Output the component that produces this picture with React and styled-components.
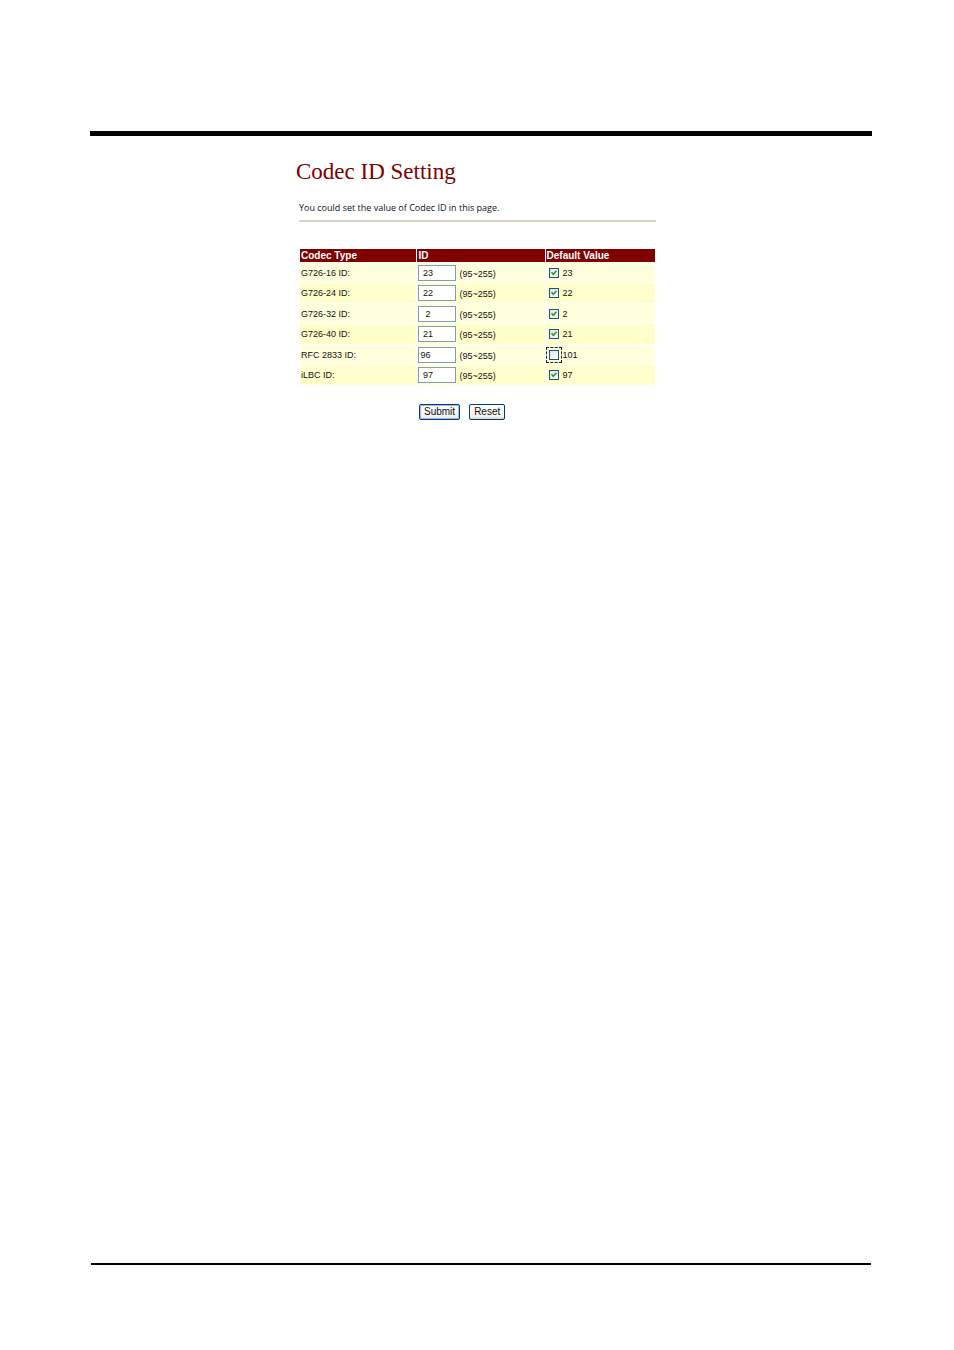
import React from "react";
import styled, { createGlobalStyle } from "styled-components";

const GlobalStyle = createGlobalStyle`
  * {
    box-sizing: border-box;
  }

  body {
    margin: 0;
    background: #ffffff;
    color: #111111;
    font-family: "Liberation Sans", Arial, sans-serif;
    font-size: 9px;
    line-height: 12px;
  }
`;

const Page = styled.div`
  display: flex;
  flex-direction: column;
  min-height: 100vh;
  padding: 131px 82px 85px 90px;
`;

const HeaderRule = styled.header`
  border-top: 5px solid #000000;
`;

const FooterRule = styled.footer`
  margin: auto 1px 0;
  border-top: 2px solid #000000;
`;

const Content = styled.main`
  width: 100%;
  max-width: 370px;
  margin: 0 auto;
  padding: 22px 0 40px;
`;

const Title = styled.h1`
  margin: 0;
  color: #800000;
  font-family: "Liberation Serif", "Times New Roman", serif;
  font-size: 23px;
  font-weight: 400;
  line-height: 28px;
`;

const Intro = styled.p`
  margin: 0 10px 0 3px;
  padding: 16px 0 6px;
  border-bottom: 2px solid #d4d0c4;
  font-family: "Open Sans", Tahoma, sans-serif;
`;

const Form = styled.form`
  margin: 26px 10px 0 3px;
`;

const Table = styled.table`
  width: 100%;
  border-spacing: 1px;
  table-layout: fixed;
`;

const HeadCell = styled.th`
  width: ${(props) => props.$width};
  height: 13px;
  padding: 0 1px;
  background: #800000;
  color: #ffffff;
  font-size: 10px;
  line-height: 13px;
  text-align: left;
`;

const Row = styled.tr`
  height: ${(props) => (props.$striped ? "20px" : "19px")};
  background: ${(props) => (props.$striped ? "#ffffcc" : "#ffffdd")};
`;

const Cell = styled.td`
  padding: 0;
`;

const NameLabel = styled.label`
  display: block;
  padding-left: 1px;
`;

const IdField = styled.div`
  display: flex;
  align-items: center;
  gap: 3px;
  padding-left: 1px;
`;

const IdInput = styled.input`
  width: 38px;
  height: 16px;
  padding: 0 1px;
  border: 1px solid #7f9db9;
  border-radius: 0;
  background: #ffffff;
  color: #111111;
  font: inherit;
`;

const Range = styled.span`
  padding-top: 2px;
`;

const DefaultLabel = styled.label`
  display: flex;
  align-items: center;
  gap: 4px;
  padding-left: 3px;
`;

const CheckFrame = styled.span`
  display: grid;
  width: 10px;
  height: 10px;
  outline: ${(props) => (props.$focused ? "1px dashed #222222" : "none")};
  outline-offset: 2px;

  > * {
    grid-area: 1 / 1;
  }
`;

const Checkbox = styled.input`
  appearance: none;
  width: 10px;
  height: 10px;
  margin: 0;
  border: 1px solid #1c5180;
  background: linear-gradient(135deg, #e4e4e0, #ffffff);

  &:not(:checked) + svg {
    display: none;
  }
`;

const Tick = styled.svg`
  width: 10px;
  height: 10px;
  pointer-events: none;
`;

const Actions = styled.div`
  display: flex;
  gap: 9px;
  margin-top: 18px;
  padding-left: 120px;
`;

const Button = styled.button`
  height: 16px;
  padding: 0 4px;
  border: 1px solid #003c74;
  border-radius: 2px;
  background: linear-gradient(#ffffff, #f2f1ea 85%, #d8d0c4);
  box-shadow: ${(props) =>
    props.$primary ? "inset 0 0 0 1px #9ebcee" : "none"};
  color: #111111;
  font-family: inherit;
  font-size: 10px;
  line-height: 14px;
`;

const codecs = [
  { key: "g726-16", name: "G726-16 ID:", id: " 23", preset: "23", checked: true },
  { key: "g726-24", name: "G726-24 ID:", id: " 22", preset: "22", checked: true },
  { key: "g726-32", name: "G726-32 ID:", id: "  2", preset: "2", checked: true },
  { key: "g726-40", name: "G726-40 ID:", id: " 21", preset: "21", checked: true },
  { key: "rfc2833", name: "RFC 2833 ID:", id: "96", preset: "101", focused: true },
  { key: "ilbc", name: "iLBC ID:", id: " 97", preset: "97", checked: true },
];

function CodecRow({ codec, striped }) {
  return (
    <Row $striped={striped}>
      <Cell>
        <NameLabel htmlFor={codec.key}>{codec.name}</NameLabel>
      </Cell>
      <Cell>
        <IdField>
          <IdInput id={codec.key} type="text" defaultValue={codec.id} />
          <Range>(95~255)</Range>
        </IdField>
      </Cell>
      <Cell>
        <DefaultLabel>
          <CheckFrame $focused={codec.focused}>
            <Checkbox type="checkbox" defaultChecked={codec.checked} />
            <Tick viewBox="0 0 10 10" aria-hidden="true">
              <path d="M2.5 4.2 L4.3 6.2 L7.5 2.8" fill="none" stroke="#21a121" strokeWidth="1.6" />
            </Tick>
          </CheckFrame>
          {codec.preset}
        </DefaultLabel>
      </Cell>
    </Row>
  );
}

function App() {
  return (
    <>
      <GlobalStyle />
      <Page>
        <HeaderRule />
        <Content>
          <Title>Codec ID Setting</Title>
          <Intro>You could set the value of Codec ID in this page.</Intro>
          <Form onSubmit={(e) => e.preventDefault()}>
            <Table>
              <thead>
                <tr>
                  <HeadCell $width="33%">Codec Type</HeadCell>
                  <HeadCell $width="36%">ID</HeadCell>
                  <HeadCell $width="31%">Default Value</HeadCell>
                </tr>
              </thead>
              <tbody>
                {codecs.map((codec, index) => (
                  <CodecRow key={codec.key} codec={codec} striped={index % 2 === 1} />
                ))}
              </tbody>
            </Table>
            <Actions>
              <Button type="submit" $primary>
                Submit
              </Button>
              <Button type="reset">Reset</Button>
            </Actions>
          </Form>
        </Content>
        <FooterRule />
      </Page>
    </>
  );
}

export default App;
